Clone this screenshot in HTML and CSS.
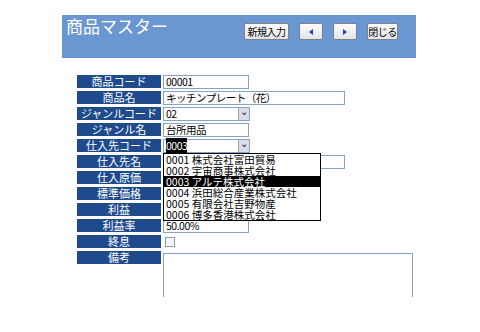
FILE: index.html
```html
<!DOCTYPE html>
<html lang="ja">
<head>
    <meta charset="UTF-8">
    <title>商品マスター</title>
    <link rel="stylesheet" href="styles.css">
</head>
<body>
    <div class="page">
        <div class="header">
            <h1>商品マスター</h1>
            <div class="tools">
                <button class="btn new">新規入力</button>
                <button class="btn arrow"><span class="tri left"></span></button>
                <button class="btn arrow"><span class="tri right"></span></button>
                <button class="btn close">閉じる</button>
            </div>
        </div>

        <div class="form">
            <div class="label">商品コード</div>
            <div class="field"><div class="input short">00001</div></div>

            <div class="label">商品名</div>
            <div class="field"><div class="input wide">キッチンプレート（花）</div></div>

            <div class="label">ジャンルコード</div>
            <div class="field"><div class="select">02<span class="drop">&#8964;</span></div></div>

            <div class="label">ジャンル名</div>
            <div class="field"><div class="input short">台所用品</div></div>

            <div class="label">仕入先コード</div>
            <div class="field">
                <div class="select"><span class="hl">0003</span><span class="drop">&#8964;</span></div>
                <ul class="list">
                    <li>0001&nbsp;株式会社富田貿易</li>
                    <li>0002&nbsp;宇宙商事株式会社</li>
                    <li class="sel">0003&nbsp;アルテ株式会社</li>
                    <li>0004&nbsp;浜田総合産業株式会社</li>
                    <li>0005&nbsp;有限会社吉野物産</li>
                    <li>0006&nbsp;博多香港株式会社</li>
                </ul>
            </div>

            <div class="label">仕入先名</div>
            <div class="field"><div class="input wide"></div></div>

            <div class="label">仕入原価</div>
            <div class="field"><div class="input short"></div></div>

            <div class="label">標準価格</div>
            <div class="field"><div class="input short"></div></div>

            <div class="label">利益</div>
            <div class="field"><div class="input short"></div></div>

            <div class="label">利益率</div>
            <div class="field"><div class="input short">50.00%</div></div>

            <div class="label">終息</div>
            <div class="field"><span class="check"></span></div>

            <div class="label">備考</div>
            <div class="field memo-cell"><div class="memo"></div></div>
        </div>
    </div>
</body>
</html>
```

FILE: styles.css
```css
body {
    margin: 0;
    background: #fff;
    font-family: "Noto Sans CJK JP", "Noto Sans", sans-serif;
    color: #000;
}
.page {
    width: 354px;
    margin: 15px 0 0 62px;
}
.header {
    display: flex;
    height: 43px;
    background: #6a96d1;
}
.header h1 {
    margin: 0;
    padding: 0 0 0 4px;
    font-size: 17px;
    font-weight: normal;
    line-height: 22px;
    color: #fff;
}
.tools {
    display: flex;
    gap: 10px;
    margin-left: auto;
    padding: 8px 18px 0 0;
    align-items: flex-start;
}
.btn {
    height: 17px;
    padding: 0;
    font-family: inherit;
    font-size: 10px;
    line-height: 14px;
    letter-spacing: -0.5px;
    background: linear-gradient(#fbfbfb, #e4e4e4);
    border: 1px solid #7a8290;
    border-radius: 2px;
    color: #000;
}
.btn.new {
    width: 45px;
}
.btn.close {
    width: 31px;
}
.btn.arrow {
    width: 24px;
    display: flex;
    align-items: center;
    justify-content: center;
}
.tri {
    width: 0;
    height: 0;
    border-top: 3px solid transparent;
    border-bottom: 3px solid transparent;
}
.tri.left {
    border-right: 4px solid #1f3fbf;
}
.tri.right {
    border-left: 4px solid #1f3fbf;
}
.form {
    display: grid;
    grid-template-columns: 84px 1fr;
    grid-auto-rows: minmax(13px, auto);
    column-gap: 2px;
    row-gap: 3px;
    margin: 17px 0 0 15px;
    font-size: 11px;
}
.label {
    align-self: start;
    height: 13px;
    background: #1f4b8c;
    color: #fff;
    text-align: center;
    line-height: 13px;
}
.field {
    position: relative;
    display: flex;
    align-items: flex-start;
    height: 13px;
}
.input,
.select {
    box-sizing: border-box;
    height: 14px;
    padding: 0 2px;
    border: 1px solid #86a3c7;
    background: #fff;
    font-size: 10.5px;
    line-height: 12px;
    letter-spacing: -0.5px;
    white-space: nowrap;
}
.input.short {
    width: 86px;
}
.input.wide {
    width: 182px;
}
.select {
    position: relative;
    width: 87px;
}
.drop {
    position: absolute;
    right: 0;
    top: 0;
    width: 10px;
    height: 12px;
    background: #d9dde6;
    border-left: 1px solid #9aa6b8;
    font-size: 10px;
    line-height: 6px;
    text-align: center;
    color: #223;
    letter-spacing: 0;
}
.hl {
    background: #000;
    color: #fff;
}
.list {
    position: absolute;
    top: 14px;
    left: 0;
    width: 156px;
    margin: 0;
    padding: 0;
    list-style: none;
    border: 1px solid #000;
    background: #fff;
    font-size: 10.5px;
    z-index: 2;
}
.list li {
    height: 11px;
    padding-left: 2px;
    line-height: 11px;
    white-space: nowrap;
}
.list li.sel {
    background: #000;
    color: #fff;
}
.check {
    width: 8px;
    height: 8px;
    margin: 2px 0 0 2px;
    border: 1px solid #8a9bb4;
    background: #f4f4f4;
}
.field.memo-cell {
    height: 46px;
}
.memo {
    box-sizing: border-box;
    width: 250px;
    height: 45px;
    margin-top: 2px;
    border: 1px solid #86a3c7;
    background: #fff;
}
```
